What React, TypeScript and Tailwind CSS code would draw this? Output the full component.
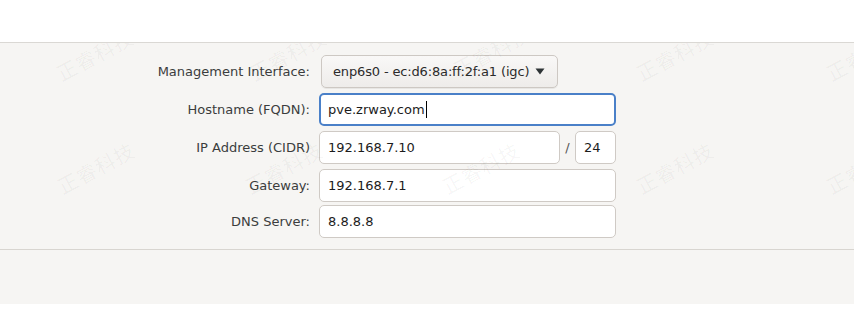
import React from "react";

const marks: { x: number; y: number }[] = [
  { x: 95, y: -2 },
  { x: 288, y: -2 },
  { x: 492, y: -6 },
  { x: 675, y: -2 },
  { x: 865, y: -2 },
  { x: 96, y: 111 },
  { x: 284, y: 111 },
  { x: 481, y: 111 },
  { x: 675, y: 111 },
  { x: 865, y: 111 },
];

function Label({ children }: { children: React.ReactNode }) {
  return (
    <div className="w-[311px] shrink-0 text-right text-[#3b3d3d] pr-[1px]">{children}</div>
  );
}

function Field({ value, w, focused }: { value: string; w: string; focused?: boolean }) {
  return (
    <div
      className={
        focused
          ? `${w} h-[33px] rounded-[5px] border-2 border-[#4a80c8] bg-white pl-[7px] flex items-center text-[#1c1c1c]`
          : `${w} h-[33px] rounded-[5px] border border-[#cfcac5] bg-white pl-[8px] flex items-center text-[#1c1c1c]`
      }
    >
      <span>{value}</span>
      {focused ? <span className="ml-[1px] w-px h-[17px] bg-black" /> : null}
    </div>
  );
}

export default function App() {
  return (
    <div className="w-[854px] h-[333px] bg-white text-[13px] font-['DejaVu_Sans',sans-serif]">
      <div className="h-[42px]" />
      <div className="relative h-[262px] border-t border-[#dad8d4] bg-[#f6f5f3] overflow-hidden">
        <div className="pt-[12px] flex flex-col">
          <div className="flex items-center h-[33px]">
            <Label>Management Interface:</Label>
            <div className="ml-[10px] w-[237px] h-[33px] rounded-[5px] border border-[#cdc8c3] bg-gradient-to-b from-[#f9f8f7] to-[#eeecea] shadow-[0_1px_0_rgba(0,0,0,0.06)] pl-[11px] pr-[12px] flex items-center justify-between text-[#2b2b2b]">
              <span className="tracking-[-0.15px]">enp6s0 - ec:d6:8a:ff:2f:a1 (igc)</span>
              <svg width="10" height="7" viewBox="0 0 10 7">
                <path d="M0.5 0.5 L9.5 0.5 L5 6.5 Z" fill="#2e3436" />
              </svg>
            </div>
          </div>
          <div className="flex items-center h-[33px] mt-[5px]">
            <Label>Hostname (FQDN):</Label>
            <div className="ml-[8px]">
              <Field value="pve.zrway.com" w="w-[297px]" focused />
            </div>
          </div>
          <div className="flex items-center h-[33px] mt-[5px]">
            <Label>IP Address (CIDR)</Label>
            <div className="ml-[8px] flex items-center">
              <Field value="192.168.7.10" w="w-[241px]" />
              <div className="w-[15px] text-center text-[#555]">/</div>
              <Field value="24" w="w-[41px]" />
            </div>
          </div>
          <div className="flex items-center h-[33px] mt-[5px]">
            <Label>Gateway:</Label>
            <div className="ml-[8px]">
              <Field value="192.168.7.1" w="w-[297px]" />
            </div>
          </div>
          <div className="flex items-center h-[33px] mt-[3px]">
            <Label>DNS Server:</Label>
            <div className="ml-[8px]">
              <Field value="8.8.8.8" w="w-[297px]" />
            </div>
          </div>
          <div className="mt-[11px] border-t border-[#d8d5d0]" />
        </div>
        <div className="pointer-events-none absolute inset-0">
          {marks.map((m, i) => (
            <div
              key={i}
              className="absolute -translate-x-1/2 -rotate-[28deg] text-[20px] leading-[28px] tracking-[1px] text-[rgba(0,0,0,0.045)] font-['Noto_Sans_CJK_SC',sans-serif] whitespace-nowrap"
              style={{ left: m.x, top: m.y }}
            >
              正睿科技
            </div>
          ))}
        </div>
      </div>
    </div>
  );
}
